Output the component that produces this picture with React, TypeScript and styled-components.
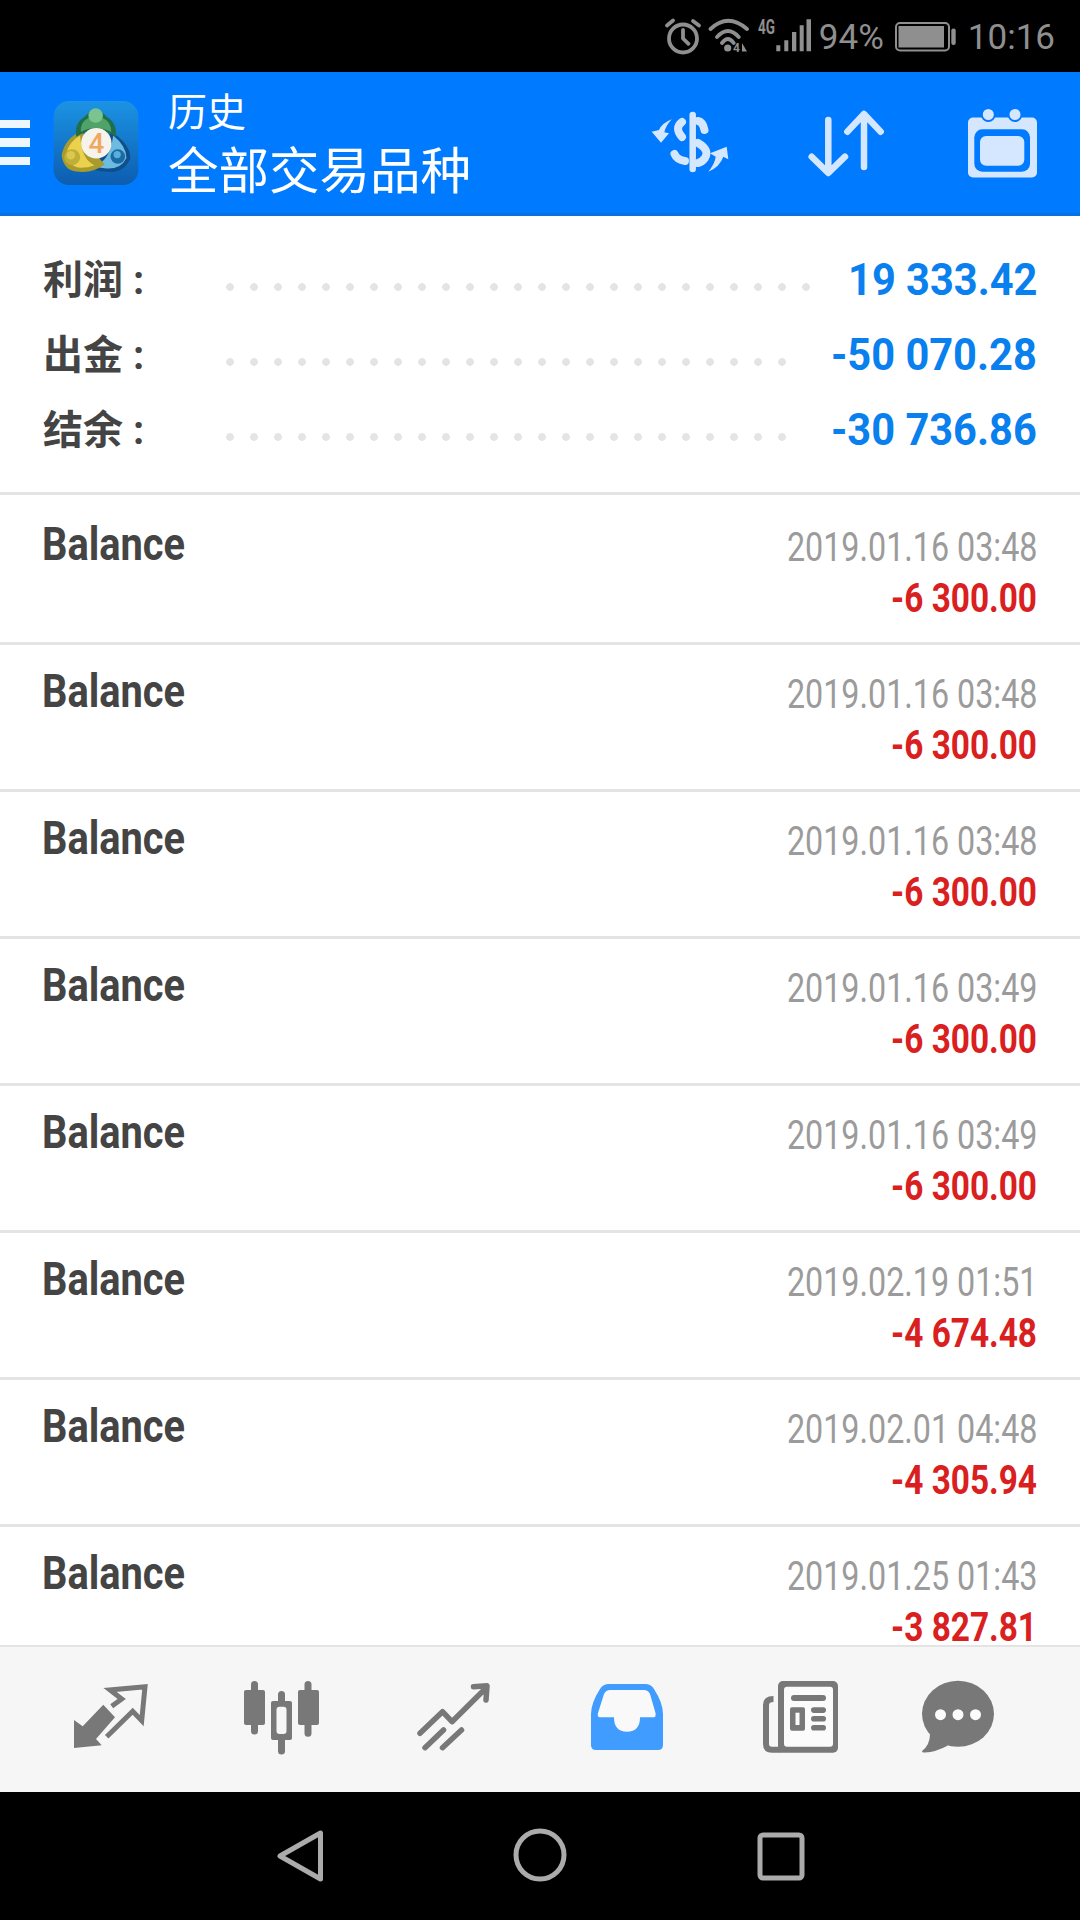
import React from "react";
import styled, { createGlobalStyle } from "styled-components";

const GlobalStyle = createGlobalStyle`
  html, body {
    margin: 0;
    padding: 0;
    background: #000;
  }
`;

const Screen = styled.div`
  width: 1080px;
  height: 1920px;
  display: flex;
  flex-direction: column;
  overflow: hidden;
  background: #fff;
  font-family: Roboto, "Noto Sans CJK SC", sans-serif;
`;

const StatusBar = styled.div`
  flex: none;
  height: 72px;
  background: #000;
  color: #8f8f8f;
  display: flex;
  align-items: center;
  justify-content: flex-end;
  padding-right: 25px;
  font-size: 35px;
`;

const StatusText = styled.span<{ $left: number }>`
  margin-left: ${(p) => p.$left}px;
  padding-top: 4px;
  line-height: 68px;
`;

const Header = styled.header`
  flex: none;
  height: 144px;
  box-sizing: border-box;
  background: #007aff;
  border-bottom: 3px solid #0870e0;
  display: flex;
  align-items: center;
  position: relative;
  color: #fff;
`;

const Burger = styled.div`
  width: 30px;
  display: flex;
  flex-direction: column;
  gap: 10px;
  margin-right: 23px;
`;

const BurgerBar = styled.span`
  height: 8.5px;
  background: #eef6ff;
`;

const Titles = styled.div`
  margin-left: 29px;
  margin-top: -2px;
  display: flex;
  flex-direction: column;
  font-family: "Noto Sans CJK SC", sans-serif;
  font-weight: 400;
`;

const SubTitle = styled.div`
  font-size: 39px;
  line-height: 50px;
`;

const MainTitle = styled.div`
  font-size: 50.5px;
  line-height: 66px;
`;

const HeaderActions = styled.svg`
  position: absolute;
  right: 0;
  top: 0;
  width: 440px;
  height: 141px;
`;

const Summary = styled.section`
  flex: none;
  height: 279px;
  box-sizing: border-box;
  padding: 26px 43px 0;
  border-bottom: 3px solid #e4e4e4;
`;

const SummaryRow = styled.div`
  height: 75px;
  display: flex;
  align-items: center;
`;

const SummaryLabel = styled.span`
  width: 181px;
  flex: none;
  margin-bottom: 5px;
  font-size: 40px;
  font-weight: 700;
  color: #444;
`;

const Leader = styled.span<{ $count: number }>`
  flex: none;
  width: ${(p) => p.$count * 24}px;
  height: 10px;
  margin-top: 14px;
  background-image: radial-gradient(circle at 6px 5px, #e4e4e4 3.6px, transparent 4px);
  background-size: 24px 10px;
  background-repeat: repeat-x;
`;

const Squeezed = styled.span<{ $x: number }>`
  display: inline-block;
  transform: scaleX(${(p) => p.$x});
  transform-origin: right center;
  white-space: nowrap;
`;

const SummaryValue = styled.span`
  margin-left: auto;
  font-size: 44px;
  font-weight: 700;
  color: #0a7fee;
`;

const List = styled.div`
  flex: 1;
  min-height: 0;
  overflow: hidden;
`;

const Row = styled.div`
  height: 147px;
  box-sizing: border-box;
  padding: 18px 43px 0 42px;
  border-bottom: 3px solid #e4e4e4;
  display: flex;
  justify-content: space-between;

  &:first-child {
    height: 150px;
    padding-top: 21px;
  }
`;

const RowTitle = styled.span`
  display: inline-block;
  height: 56px;
  font-size: 46px;
  line-height: 56px;
  font-weight: 700;
  color: #444;
  transform: scaleX(0.865);
  transform-origin: left center;
`;

const RowSide = styled.div`
  display: flex;
  flex-direction: column;
  align-items: flex-end;
  padding-top: 6px;
`;

const RowDate = styled.div`
  font-size: 40px;
  line-height: 52px;
  color: #9b9b9b;
`;

const RowAmount = styled.div`
  font-size: 40px;
  line-height: 50px;
  font-weight: 700;
  color: #d9201f;
`;

const TabBar = styled.nav`
  flex: none;
  height: 147px;
  box-sizing: border-box;
  border-top: 2px solid #e4e4e4;
  background: #f6f6f6;
  padding-left: 24px;
  display: flex;
`;

const TabIcon = styled.svg`
  width: 172px;
  height: 145px;
  flex: none;
  fill: #787878;
  stroke: none;
`;

const NavBar = styled.div`
  flex: none;
  height: 128px;
  background: #000;
`;

const NavIcons = styled.svg`
  display: block;
  width: 1080px;
  height: 128px;
  fill: none;
  stroke: #ababab;
  stroke-width: 5px;
  stroke-linejoin: round;
`;

const rows = [
  { date: "2019.01.16 03:48", amount: "-6 300.00" },
  { date: "2019.01.16 03:48", amount: "-6 300.00" },
  { date: "2019.01.16 03:48", amount: "-6 300.00" },
  { date: "2019.01.16 03:49", amount: "-6 300.00" },
  { date: "2019.01.16 03:49", amount: "-6 300.00" },
  { date: "2019.02.19 01:51", amount: "-4 674.48" },
  { date: "2019.02.01 04:48", amount: "-4 305.94" },
  { date: "2019.01.25 01:43", amount: "-3 827.81" },
];

const summary = [
  { label: "利润 :", dots: 25, value: "19 333.42" },
  { label: "出金 :", dots: 24, value: "-50 070.28" },
  { label: "结余 :", dots: 24, value: "-30 736.86" },
];

const StatusIcons = () => (
  <svg width="156" height="48" viewBox="664 12 156 48">
    <g fill="none" stroke="#8f8f8f" strokeWidth="3.8" strokeLinecap="round" strokeLinejoin="round">
      <circle cx="686" cy="38.5" r="14" />
      <path d="M686 30v8.5l5.5 5.3M670 25.5l6-5M702 25.5l-6-4.5" />
      <path d="M713.5 29Q731 12.5 750 29M720 37Q731 25 741.7 37M725 43Q731 35 736.7 43" />
    </g>
    <circle cx="730.7" cy="48" r="3.6" fill="#8f8f8f" />
    <text x="736" y="52" fontFamily="Roboto" fontWeight="700" fontSize="12" fill="#8f8f8f">4</text>
    <path d="M745 43v8.5h5z" fill="#8f8f8f" />
    <text x="761" y="34" fontFamily="Roboto" fontWeight="700" fontSize="20" textLength="17" lengthAdjust="spacingAndGlyphs" fill="#8f8f8f">4G</text>
    <path d="M779.3 45.3h4v6h-4zM787.3 40.3h4v11h-4zM795 32h4.3v19.3H795zM802.7 25.3h4v26h-4zM809.5 19.3h4.5v32h-4.5z" fill="#8f8f8f" />
  </svg>
);

const BatteryIcon = () => (
  <svg width="61" height="48" viewBox="896 12 61 48" style={{ marginLeft: 11 }}>
    <rect x="897" y="23" width="53" height="27.5" rx="4" fill="none" stroke="#8f8f8f" strokeWidth="2" />
    <rect x="899.5" y="26" width="45.5" height="21.5" fill="#8f8f8f" />
    <rect x="952.3" y="28.5" width="4.4" height="16.5" rx="2" fill="#8f8f8f" />
  </svg>
);

const AppLogo = () => (
  <svg width="86" height="84" viewBox="16 18 256 254">
    <defs>
      <linearGradient id="logoBg" x1="0" y1="0" x2="0" y2="1">
        <stop offset="0" stopColor="#1c93e4" />
        <stop offset="1" stopColor="#0c5db0" />
      </linearGradient>
    </defs>
    <rect x="16" y="18" width="256" height="254" rx="46" fill="url(#logoBg)" />
    <path d="M190 112Q246 146 248 190Q230 238 175 232Q140 232 112 210L150 170Z" fill="#0f4f8c" />
    <path d="M196 122Q236 154 236 190Q220 224 176 222Q158 222 140 214Q186 200 196 122Z" fill="#6cbbe0" />
    <circle cx="210" cy="186" r="22" fill="#1c6aa3" />
    <circle cx="208" cy="180" r="11" fill="#5aaedb" />
    <path d="M102 108Q50 130 40 182Q46 232 95 232Q134 236 170 210L120 150Z" fill="#a89a2c" />
    <path d="M96 122Q60 142 54 178Q60 216 98 220Q120 220 140 212Q100 196 96 122Z" fill="#ecd24c" />
    <circle cx="72" cy="188" r="24" fill="#bfae38" />
    <circle cx="68" cy="182" r="13" fill="#dcc84a" />
    <path d="M84 126Q78 84 110 66Q143 24 176 66Q208 84 204 126Q145 88 84 126Z" fill="#1f6f48" />
    <path d="M98 112Q96 82 120 70Q143 44 166 70Q190 82 190 112Q143 88 98 112Z" fill="#4fa368" />
    <circle cx="143" cy="62" r="22" fill="#7cc48f" />
    <circle cx="145" cy="146" r="46" fill="#f6f3ec" />
    <text x="145" y="176" textAnchor="middle" fontFamily="Roboto" fontWeight="500" fontSize="84" fill="#f0a860">4</text>
  </svg>
);

// drawn in page coordinates, the viewBox is the box of the icon on screen
const ActionIcons = () => (
  <HeaderActions viewBox="640 72 440 141">
    <g fill="none" stroke="#d5e6ff" strokeLinecap="round" strokeLinejoin="round">
      <path d="M692.7 115v54" strokeWidth="6.5" />
      <path d="M698 121Q703 122 704.5 130M682 122Q674 128 682 137M698 143Q710 150 705 158Q702 162 698 163M674.5 154Q677 160 685 161" strokeWidth="8" />
      <path d="M828.3 120v52M811.7 156.7l16.6 16.3 16.7-16.3M864 115v52M847.3 131.7L864 114l16.7 17.7" strokeWidth="6.5" />
    </g>
    <path d="M671.7 119.3Q661.7 123.3 659 130L651.7 131.7 661 142.7 669 133.3 664.3 132.3Q665.7 126 671.7 119.3Z" fill="#d5e6ff" />
    <path d="M708.3 171.7Q715 163.3 715.7 156.7L710 153.3 726.7 146.7 728.3 159.3 723.3 156.7Q720 166.7 708.3 171.7Z" fill="#d5e6ff" />
    <rect x="968" y="117.5" width="69" height="60" rx="5" fill="#d5e6ff" />
    <rect x="974.3" y="129.3" width="55.7" height="42.4" rx="8" fill="#007aff" />
    <rect x="980" y="136" width="44.3" height="29.7" rx="6" fill="#d5e6ff" />
    <circle cx="988.3" cy="114.5" r="6.5" fill="#d5e6ff" stroke="#007aff" strokeWidth="2" />
    <circle cx="1015" cy="114.5" r="6.5" fill="#d5e6ff" stroke="#007aff" strokeWidth="2" />
  </HeaderActions>
);

const tabBox = (index: number) => `${24 + index * 172} 1647 172 145`;

const TradeIcon = () => (
  <TabIcon viewBox={tabBox(0)}>
    <path d="M74 1720V1748L101.7 1745.3 96 1739 115 1717.3 103.3 1704.7 82.7 1726.3Z" />
    <path d="M106.7 1736.7L132.7 1711.3 141.7 1720.7 145 1686.7 110 1690 121.7 1699 111.7 1706.3" fill="none" stroke="#787878" strokeWidth="5" />
  </TabIcon>
);

const CandlesIcon = () => (
  <TabIcon viewBox={tabBox(1)}>
    <rect x="244" y="1690" width="21" height="35" rx="2" />
    <rect x="251" y="1681" width="7" height="53.5" rx="3.5" />
    <rect x="298" y="1690" width="21" height="35" rx="2" />
    <rect x="304.5" y="1681" width="7" height="55.7" rx="3.5" />
    <rect x="278" y="1691" width="7" height="63.5" rx="3.5" />
    <rect x="271" y="1701" width="21" height="39" rx="2" />
    <rect x="276.5" y="1706.7" width="10" height="27.3" rx="3" fill="#f6f6f6" />
  </TabIcon>
);

const TrendIcon = () => (
  <TabIcon viewBox={tabBox(2)}>
    <path
      d="M420 1733.3L442.5 1711.7 452 1721.7 486 1688M473.5 1686.7L487 1685.7 486 1700M425 1747.7L443.5 1730M442.5 1747.7L461.5 1730"
      fill="none"
      stroke="#787878"
      strokeWidth="5.5"
      strokeLinecap="round"
      strokeLinejoin="round"
    />
  </TabIcon>
);

const HistoryIcon = () => (
  <TabIcon viewBox={tabBox(3)}>
    <path d="M609 1684L645 1684Q651 1684 654 1689Q663 1703 663 1714L663 1745Q663 1750 658 1750L596 1750Q591 1750 591 1745L591 1714Q591 1703 600 1689Q603 1684 609 1684Z" fill="#419cff" />
    <path d="M610 1690L644 1690Q648 1690 650 1694L655.5 1713Q656 1717.3 654 1717.3L640 1717.3Q640 1731.7 627 1731.7Q614 1731.7 614 1717.3L600 1717.3Q597 1717.3 598 1713L604 1694Q606 1690 610 1690Z" fill="#f9f9f9" />
  </TabIcon>
);

const NewsIcon = () => (
  <TabIcon viewBox={tabBox(4)}>
    <rect x="778" y="1681" width="60" height="71.7" rx="5" />
    <rect x="784" y="1686.7" width="49" height="60" rx="3" fill="#fbfbfb" />
    <path d="M773.5 1699Q766 1699 766 1705L766 1744Q766 1749.7 772 1749.7L782 1749.7" fill="none" stroke="#787878" strokeWidth="6" />
    <rect x="791" y="1695" width="35" height="6" rx="3" />
    <rect x="790" y="1707.3" width="15" height="23.4" rx="2" />
    <rect x="795.5" y="1712.7" width="4" height="12.3" fill="#fbfbfb" />
    <rect x="811" y="1707.3" width="15" height="5.6" rx="2.8" />
    <rect x="811" y="1716" width="15" height="5.6" rx="2.8" />
    <rect x="811" y="1725" width="15" height="5.6" rx="2.8" />
  </TabIcon>
);

const ChatIcon = () => (
  <TabIcon viewBox={tabBox(5)}>
    <ellipse cx="958" cy="1713.8" rx="36" ry="33" />
    <path d="M930 1734Q930 1745 922 1751Q922 1753 925 1752.5Q936 1752 948 1745.5Z" />
    <circle cx="940.5" cy="1714.7" r="5.5" fill="#fbfbfb" />
    <circle cx="958" cy="1714.7" r="5.5" fill="#fbfbfb" />
    <circle cx="975.5" cy="1714.7" r="5.5" fill="#fbfbfb" />
  </TabIcon>
);

const App: React.FC = () => {
  return (
    <>
      <GlobalStyle />
      <Screen>
        <StatusBar>
          <StatusIcons />
          <StatusText $left={2}>94%</StatusText>
          <BatteryIcon />
          <StatusText $left={12}>10:16</StatusText>
        </StatusBar>

        <Header>
          <Burger>
            <BurgerBar />
            <BurgerBar />
            <BurgerBar />
          </Burger>
          <AppLogo />
          <Titles>
            <SubTitle>历史</SubTitle>
            <MainTitle>全部交易品种</MainTitle>
          </Titles>
          <ActionIcons />
        </Header>

        <Summary>
          {summary.map((item) => (
            <SummaryRow key={item.label}>
              <SummaryLabel>{item.label}</SummaryLabel>
              <Leader $count={item.dots} />
              <SummaryValue>
                <Squeezed $x={0.945}>{item.value}</Squeezed>
              </SummaryValue>
            </SummaryRow>
          ))}
        </Summary>

        <List>
          {rows.map((row, i) => (
            <Row key={i}>
              <RowTitle>Balance</RowTitle>
              <RowSide>
                <RowDate>
                  <Squeezed $x={0.807}>{row.date}</Squeezed>
                </RowDate>
                <RowAmount>
                  <Squeezed $x={0.834}>{row.amount}</Squeezed>
                </RowAmount>
              </RowSide>
            </Row>
          ))}
        </List>

        <TabBar>
          <TradeIcon />
          <CandlesIcon />
          <TrendIcon />
          <HistoryIcon />
          <NewsIcon />
          <ChatIcon />
        </TabBar>

        <NavBar>
          <NavIcons viewBox="0 1792 1080 128">
            <path d="M280 1856L320.5 1833V1879Z" />
            <circle cx="540" cy="1855" r="24" />
            <rect x="760" y="1835" width="42" height="43" rx="3" />
          </NavIcons>
        </NavBar>
      </Screen>
    </>
  );
};

export default App;
